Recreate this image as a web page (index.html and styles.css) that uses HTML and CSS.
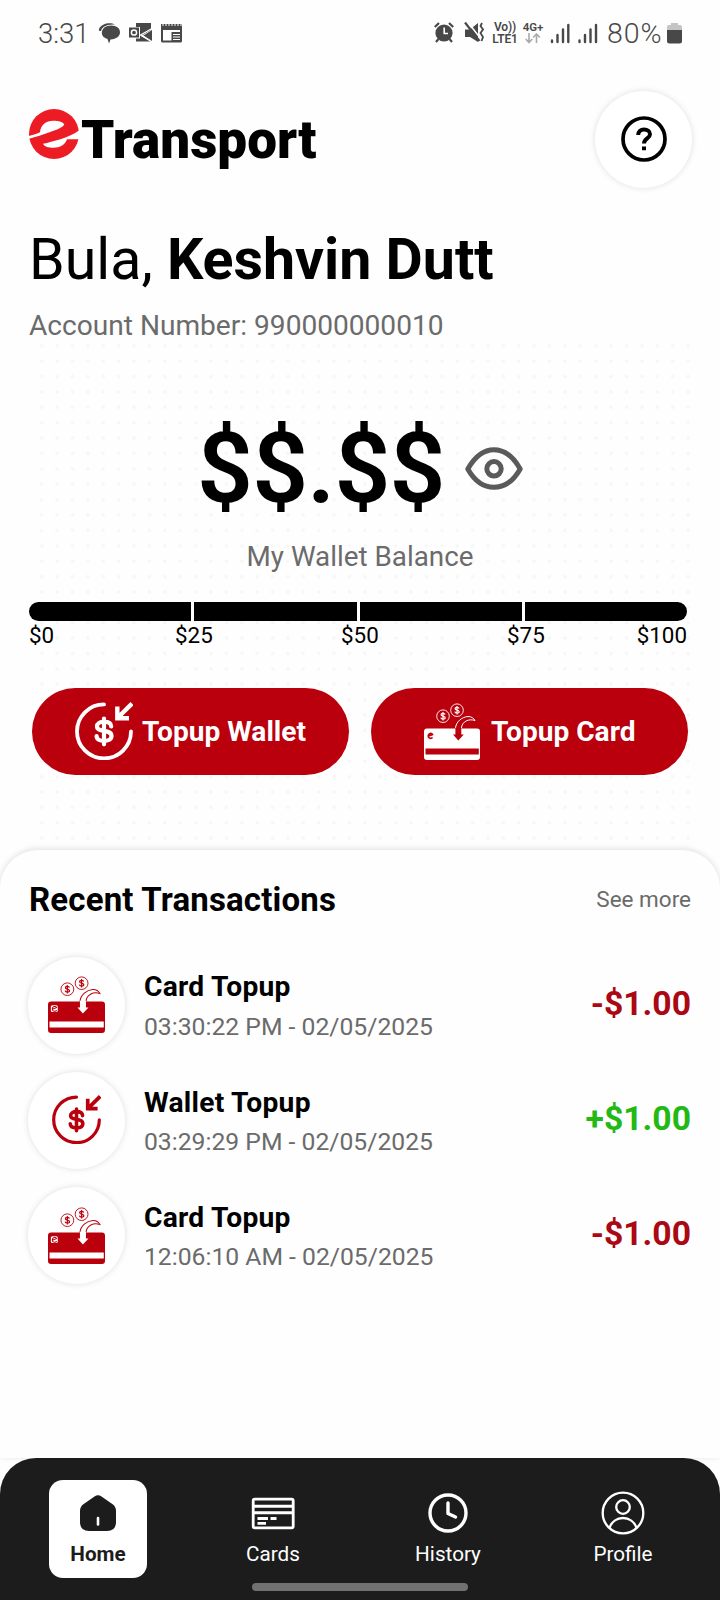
FILE: index.html
```html
<!DOCTYPE html>
<html lang="en">
<head>
<meta charset="utf-8">
<title>eTransport</title>
<link rel="stylesheet" href="styles.css">
</head>
<body>
<svg class="defs" width="0" height="0" aria-hidden="true">
  <symbol id="wallet" viewBox="0 0 58 58">
    <g fill="none" stroke="currentColor" stroke-linecap="round" stroke-linejoin="round">
      <path stroke-width="3.8" d="M29 2.4A27 27 0 1 0 56 29.5"/>
      <path stroke-width="4.4" stroke-linejoin="miter" stroke-linecap="butt" d="M57 1.600L43 15.500M42.300 4.500V16.200H54"/>
      <path stroke-width="4.200" d="M36.200 24.500C36 21 33 19.700 29 19.700C25 19.700 22 21.500 22 24.500C22 31 36.500 26.500 36.500 34C36.500 37.500 33 39 29 39C25 39 21.600 37.500 21.600 34M29 16.500V42.300"/>
    </g>
  </symbol>
  <symbol id="card" viewBox="0 0 56 57">
    <path fill="currentColor" d="M3 25.500H53a3 3 0 0 1 3 3V54a3 3 0 0 1-3 3H3a3 3 0 0 1-3-3V28.500a3 3 0 0 1 3-3Z"/>
    <path fill="var(--inner)" d="M1.500 45.500H54.800V51.500H1.500Z"/>
    <rect fill="var(--chip)" x="2.800" y="29.300" width="6.800" height="6.800" rx="1.500"/>
    <path stroke="#ba000d" fill="none" stroke-width="var(--mark)" d="M4.200 33.300L8.500 31.600C7.600 29.700 4.200 30.300 4.200 33C4.200 35.600 7.500 35.900 8.500 34.400"/>
    <g fill="none" stroke="currentColor">
      <circle cx="19" cy="13.200" r="6.300" stroke-width=".9"/>
      <circle cx="33" cy="7.200" r="6.300" stroke-width=".9"/>
      <path stroke-width="1.200" d="M21.100 11.500C20.500 9.700 17 10.100 17.100 11.700C17.200 13.500 21.200 12.700 21.200 14.800C21.200 16.700 17.300 16.700 16.800 14.700M19 9V17.400M35.100 5.500C34.500 3.700 31 4.100 31.100 5.700C31.200 7.500 35.200 6.700 35.200 8.800C35.200 10.700 31.300 10.700 30.800 8.700M33 3V11.400"/>
      <path stroke-width="1" d="M31.400 25.500C32 18.500 38 14 44 13.500C47.500 13.400 50 15.500 51 17.500C45 15.500 38 18 37.300 25.500"/>
    </g>
    <path fill="var(--inner)" d="M31.400 24.800H37.300V31.500H39.800L34.300 37.500L29 31.500H31.400Z"/>
  </symbol>
</svg>

<header class="status">
  <span class="clock">3:31</span>
  <svg class="notif" width="86" height="22" viewBox="0 0 86 22">
    <path fill="#484848" d="M1 7C3.500 1.500 12 0 17 2.600C8 2 3.800 5.500 3 9C1.500 9 .3 9 1 7ZM13 3.500C19 3.500 22 6.500 22 10.500C22 14 18.500 17 12.500 17.600L11 21.500L9.500 17C6 16 3.800 14 3.800 11C3.800 6.500 7.500 3.500 13 3.500Z"/>
    <path fill="#484848" d="M38 1H53V8L43 14L53 19V19.500H38V16.500H42V5H38ZM31 5.500H41V15.500H31ZM54 8V19L45.500 13.500Z"/>
    <circle cx="36" cy="10.500" r="2.600" fill="none" stroke="#fff" stroke-width="1.500"/>
    <path fill="none" stroke="#fff" stroke-width="1.300" d="M54 6.500L42.500 13L54 20"/>
    <path fill="#484848" d="M63 2H84V19Q84 20.500 82.500 20.500H64.500Q63 20.500 63 19Z"/>
    <path fill="#fff" d="M65 8H82V10H73.500V18.500H65ZM75 12H82V13H75ZM75 14.500H82V15.500H75ZM75 17H82V18H75Z"/>
    <path stroke="#fff" stroke-width="1" d="M65 0V4M68 0V4M71 0V4M74 0V4M77 0V4M80 0V4M83 0V4"/>
  </svg>
  <div class="right">
    <svg width="50" height="22" viewBox="0 0 50 22">
      <circle cx="10" cy="11" r="8.600" fill="#484848"/>
      <path fill="none" stroke="#484848" stroke-width="2.200" d="M.8 5L5 1M19.200 5L15 1M4.500 17L2 20M15.500 17L18 20"/>
      <path fill="none" stroke="#fff" stroke-width="1.600" d="M10.200 5.500V11.500H14"/>
      <path fill="#484848" d="M31 7.500H36L44 1V20L36 15H31Z"/>
      <path stroke="#fff" stroke-width="1.500" d="M34.500 1L47 17"/>
      <path stroke="#484848" stroke-width="2.200" d="M31 .5L45.500 19"/>
      <path fill="none" stroke="#484848" stroke-width="1.800" d="M48 1L46.500 4L49 7.500L46.500 11L49 15L47.500 19"/>
    </svg>
    <div class="volte"><span>Vo))</span><span>LTE1</span></div>
    <div class="net"><span>4G+</span>
      <svg width="16" height="11" viewBox="0 0 16 11"><path fill="none" stroke="#aaa" stroke-width="1.600" d="M4 0V9.500M.7 6L4 9.500L7.300 6M11.500 10V1M8.200 4.500L11.500 1L14.800 4.500"/></svg>
    </div>
    <svg class="bars" width="48" height="21" viewBox="0 0 48 21"><path fill="none" stroke="#484848" stroke-width="2.400" stroke-linecap="round" d="M2 17.500V19M7.500 12V19M13 6.500V19M18.300 2V19M29.500 17.500V19M35 12V19M40.500 6.500V19M46 2V19"/></svg>
    <span class="pct">80%</span>
    <svg class="batt" width="15" height="21" viewBox="0 0 15 21"><path fill="#c4c4c4" d="M4 0H11V2H13Q15 2 15 4V8H0V4Q0 2 2 2H4Z"/><path fill="#484848" d="M0 7H15V18Q15 20.500 12.500 20.500H2.500Q0 20.500 0 18Z"/></svg>
  </div>
</header>

<div class="top">
  <div class="logo">
    <svg width="50" height="50" viewBox="0 19 50 50">
      <circle cx="25" cy="44" r="25" fill="#ed1c24"/>
      <path fill="#fff" d="M-1 46.200C4 45 8 43.800 11 42.300C11.500 35 17 30.700 24 30.700C30 30.700 34.500 32 35.300 34.500C33 38.500 24 41 14 44.500C9 46.300 4 48 -1 48.800Z"/>
      <path fill="#fff" d="M14 53.800C24 51.500 40 48 51 39.800V49.300H38C36.500 54.500 31 57.800 24.500 57.800C19.500 57.800 15.500 56.800 14 53.800Z"/>
    </svg>
    <span class="wordmark">Transport</span>
  </div>
  <div class="help">
    <svg width="48" height="48" viewBox="0 0 48 48" fill="none" stroke="#000"><circle cx="24" cy="24" r="21" stroke-width="3.700"/><path stroke-width="4" d="M18.200 20C18.200 16.500 20.500 14.500 24 14.500C27.500 14.500 30 16.500 30 19.300C30 23.500 24 23.500 24 28.500M24 31.500V35.300"/></svg>
  </div>
</div>

<h1 class="hello">Bula, <b>Keshvin Dutt</b></h1>
<p class="account">Account Number: 990000000010</p>

<section class="balance">
  <div class="amount"><span>$$.$$</span>
    <svg width="58" height="46" viewBox="0 0 58 46" fill="none" stroke="#5a5a5a" stroke-width="5"><path stroke-linejoin="round" d="M2.800 23C9 12 17.500 3.700 29 3.700S49 12 55.200 23C49 34 40.500 41.300 29 41.300S9 34 2.800 23Z"/><circle cx="29" cy="22.800" r="7.200"/></svg>
  </div>
  <p class="caption">My Wallet Balance</p>
  <div class="meter"><i></i><i></i><i></i><i></i></div>
  <div class="scale"><span>$0</span><span>$25</span><span>$50</span><span>$75</span><span>$100</span></div>
  <div class="actions">
    <div class="btn"><svg width="58" height="58"><use href="#wallet"/></svg><span>Topup Wallet</span></div>
    <div class="btn card-btn"><svg width="56" height="57"><use href="#card"/></svg><span>Topup Card</span></div>
  </div>
</section>

<section class="recent">
  <div class="head"><h2>Recent Transactions</h2><span>See more</span></div>
  <div class="row">
    <div class="disc"><svg width="57" height="57" viewBox="0 0 56 57" preserveAspectRatio="none"><use href="#card" width="56" height="57"/></svg></div>
    <div class="info"><b>Card Topup</b><span>03:30:22 PM - 02/05/2025</span></div>
    <strong>-$1.00</strong>
  </div>
  <div class="row">
    <div class="disc"><svg width="49" height="49"><use href="#wallet"/></svg></div>
    <div class="info"><b>Wallet Topup</b><span>03:29:29 PM - 02/05/2025</span></div>
    <strong class="plus">+$1.00</strong>
  </div>
  <div class="row">
    <div class="disc"><svg width="57" height="57" viewBox="0 0 56 57" preserveAspectRatio="none"><use href="#card" width="56" height="57"/></svg></div>
    <div class="info"><b>Card Topup</b><span>12:06:10 AM - 02/05/2025</span></div>
    <strong>-$1.00</strong>
  </div>
</section>

<nav class="nav">
  <div class="tab active">
    <svg width="44" height="44" viewBox="0 0 44 44"><path fill="#1c1c1c" d="M18.500 5.500Q22 3 25.500 5.500L37 13.500Q40 16 40 20V31Q40 40 31 40H13Q4 40 4 31V20Q4 16 7 13.500Z"/><path stroke="#fff" stroke-width="2.600" stroke-linecap="round" d="M22 27V33.500"/></svg>
    <span>Home</span>
  </div>
  <div class="tab">
    <svg width="44" height="44" viewBox="0 0 44 44"><rect x="2.200" y="8.200" width="40" height="28.600" rx="1.500" fill="none" stroke="#fff" stroke-width="2.800"/><path stroke="#fff" stroke-width="3" d="M3 15.300H42M3 21.700H42"/><path stroke="#fff" stroke-width="2.800" d="M6.500 27.500H17M19.500 27.500H25.500M6.500 32.300H15"/></svg>
    <span>Cards</span>
  </div>
  <div class="tab">
    <svg width="44" height="44" viewBox="0 0 44 44" fill="none" stroke="#fff" stroke-width="3.400"><circle cx="22" cy="22" r="18"/><path stroke-linecap="round" stroke-linejoin="round" d="M22 12V22.500L29.500 26"/></svg>
    <span>History</span>
  </div>
  <div class="tab">
    <svg width="44" height="44" viewBox="0 0 44 44" fill="none" stroke="#fff" stroke-width="2.300"><circle cx="22" cy="22" r="20.300"/><circle cx="22" cy="16" r="6.800"/><path d="M8.500 37C10.500 30.500 16 27 22 27S33.500 30.500 35.500 37"/></svg>
    <span>Profile</span>
  </div>
  <i class="gesture"></i>
</nav>
</body>
</html>
```
FILE: styles.css
```css
* { box-sizing: border-box; }
body {
  margin: 0;
  width: 720px;
  height: 1600px;
  overflow: hidden;
  display: flex;
  flex-direction: column;
  background: #fefefe;
  color: #000;
  font-family: Roboto, "Liberation Sans", sans-serif;
}
svg { display: block; flex: none; }
.defs { position: absolute; }
h1, h2, p { margin: 0; font-weight: 400; }

.status {
  height: 66px;
  padding: 0 38px 0 38px;
  display: flex;
  align-items: center;
  color: #484848;
}
.clock, .pct { font-size: 27.5px; line-height: 32px; font-weight: 350; }
.clock { width: 60px; padding-top: 1px; }
.right { margin-left: auto; display: flex; align-items: center; }
.volte, .net { display: flex; flex-direction: column; align-items: center; font-weight: 600; }
.volte { margin-left: 7px; width: 28px; font-size: 12px; line-height: 12px; letter-spacing: -.2px; }
.net { margin-left: 3px; width: 22px; font-size: 11.500px; line-height: 11px; }
.bars { margin-left: 6px; }
.pct { margin-left: 9px; width: 58px; padding-top: 1px; font-size: 28.500px; letter-spacing: 1px; white-space: nowrap; }
.batt { margin-left: 2px; }

.top {
  margin-top: 25px;
  height: 97px;
  padding: 0 28px 0 29px;
  display: flex;
  justify-content: space-between;
}
.logo { display: flex; align-items: flex-start; padding-top: 18px; gap: 2px; }
.wordmark { font-size: 53px; line-height: 62px; font-weight: 900; letter-spacing: 0; }
.help, .disc {
  width: 97px;
  height: 97px;
  border-radius: 50%;
  background: #fff;
  box-shadow: 0 0 6px rgba(0, 0, 0, .13);
  display: flex;
  align-items: center;
  justify-content: center;
  flex: none;
}
.help { padding-bottom: 1px; }

.hello { margin: 39px 0 0 29px; font-size: 57.300px; line-height: 66px; white-space: nowrap; }
.hello b { font-weight: 700; }
.account { margin: 17px 0 0 29px; font-size: 28.100px; line-height: 32px; color: #6b6b6b; }

.balance {
  margin: 0 29px;
  padding: 68px 3px 0;
  height: 508px;
  background: radial-gradient(circle, #f6f6f6 1.300px, transparent 2.200px) 5px -4px / 15.400px 15.400px repeat;
}
.amount { height: 118px; display: flex; align-items: center; padding-left: 165px; gap: 20px; }
.amount span { font-size: 98px; line-height: 116px; font-weight: 600; letter-spacing: -.8px; }
.caption { margin-top: 13px; text-align: center; font-size: 27.800px; line-height: 32px; color: #6b6b6b; }
.meter {
  margin: 29px 1px 0 -3px;
  height: 19px;
  display: flex;
  gap: 3px;
  border-radius: 10px;
  overflow: hidden;
}
.meter i { flex: 1; background: #000; }
.scale {
  margin: 1px 1px 0 -3px;
  display: grid;
  grid-template-columns: 146px 166px 166px 1fr auto;
  font-size: 22.400px;
  line-height: 26px;
}
.actions { margin-top: 40px; display: grid; grid-template-columns: 317px 317px; gap: 22px; }
.btn {
  height: 86.500px;
  border-radius: 44px;
  background: #ba000d;
  color: #fff;
  display: flex;
  align-items: center;
  padding-left: 43px;
  gap: 9px;
  font-size: 28.100px;
  font-weight: 700;
  white-space: nowrap;
  --inner: #ba000d;
  --chip: transparent;
  --mark: 1.700;
}
.card-btn { padding-left: 53px; gap: 11px; }

.recent {
  flex: 1;
  padding: 31px 29px 0;
  background: #fefefe;
  border-radius: 38px 38px 0 0;
  box-shadow: 0 -1px 6px rgba(0, 0, 0, .13);
}
.head { display: flex; justify-content: space-between; align-items: center; margin-bottom: 37.500px; }
.head h2 { font-size: 33px; line-height: 38px; font-weight: 700; letter-spacing: .17px; }
.head span { margin-top: -2px; font-size: 22.500px; color: #6b6b6b; }
.row { display: flex; align-items: center; height: 97px; margin: 0 0 18.300px -1px; }
.disc { padding-bottom: 1px; color: #ba000d; --inner: #fff; --chip: #fff; --mark: 1; }
.info { margin-left: 19px; display: flex; flex-direction: column; gap: 8.500px; flex: 1; padding-top: 3px; }
.info b { font-size: 28.200px; line-height: 32px; letter-spacing: .25px; }
.info span { font-size: 24.700px; line-height: 30px; color: #6b6b6b; }
.row strong { margin-top: -3px; font-size: 33.700px; line-height: 38px; color: #aa0814; }
.row strong.plus { color: #22b914; }

.nav {
  position: relative;
  flex: none;
  height: 142px;
  padding: 22px 48px 0 49px;
  background: #1c1c1c;
  border-radius: 36px 36px 0 0;
  display: flex;
  justify-content: space-between;
}
.tab {
  width: 98px;
  height: 98px;
  padding-top: 11px;
  border-radius: 14px;
  display: flex;
  flex-direction: column;
  align-items: center;
  gap: 7px;
  color: #fff;
  font-size: 20.700px;
  line-height: 24px;
}
.tab svg { margin-left: -1px; }
.tab.active { background: #fff; color: #1c1c1c; font-weight: 700; }
.gesture {
  position: absolute;
  left: 252px;
  bottom: 9px;
  width: 216px;
  height: 8px;
  border-radius: 4px;
  background: #717171;
}
```
